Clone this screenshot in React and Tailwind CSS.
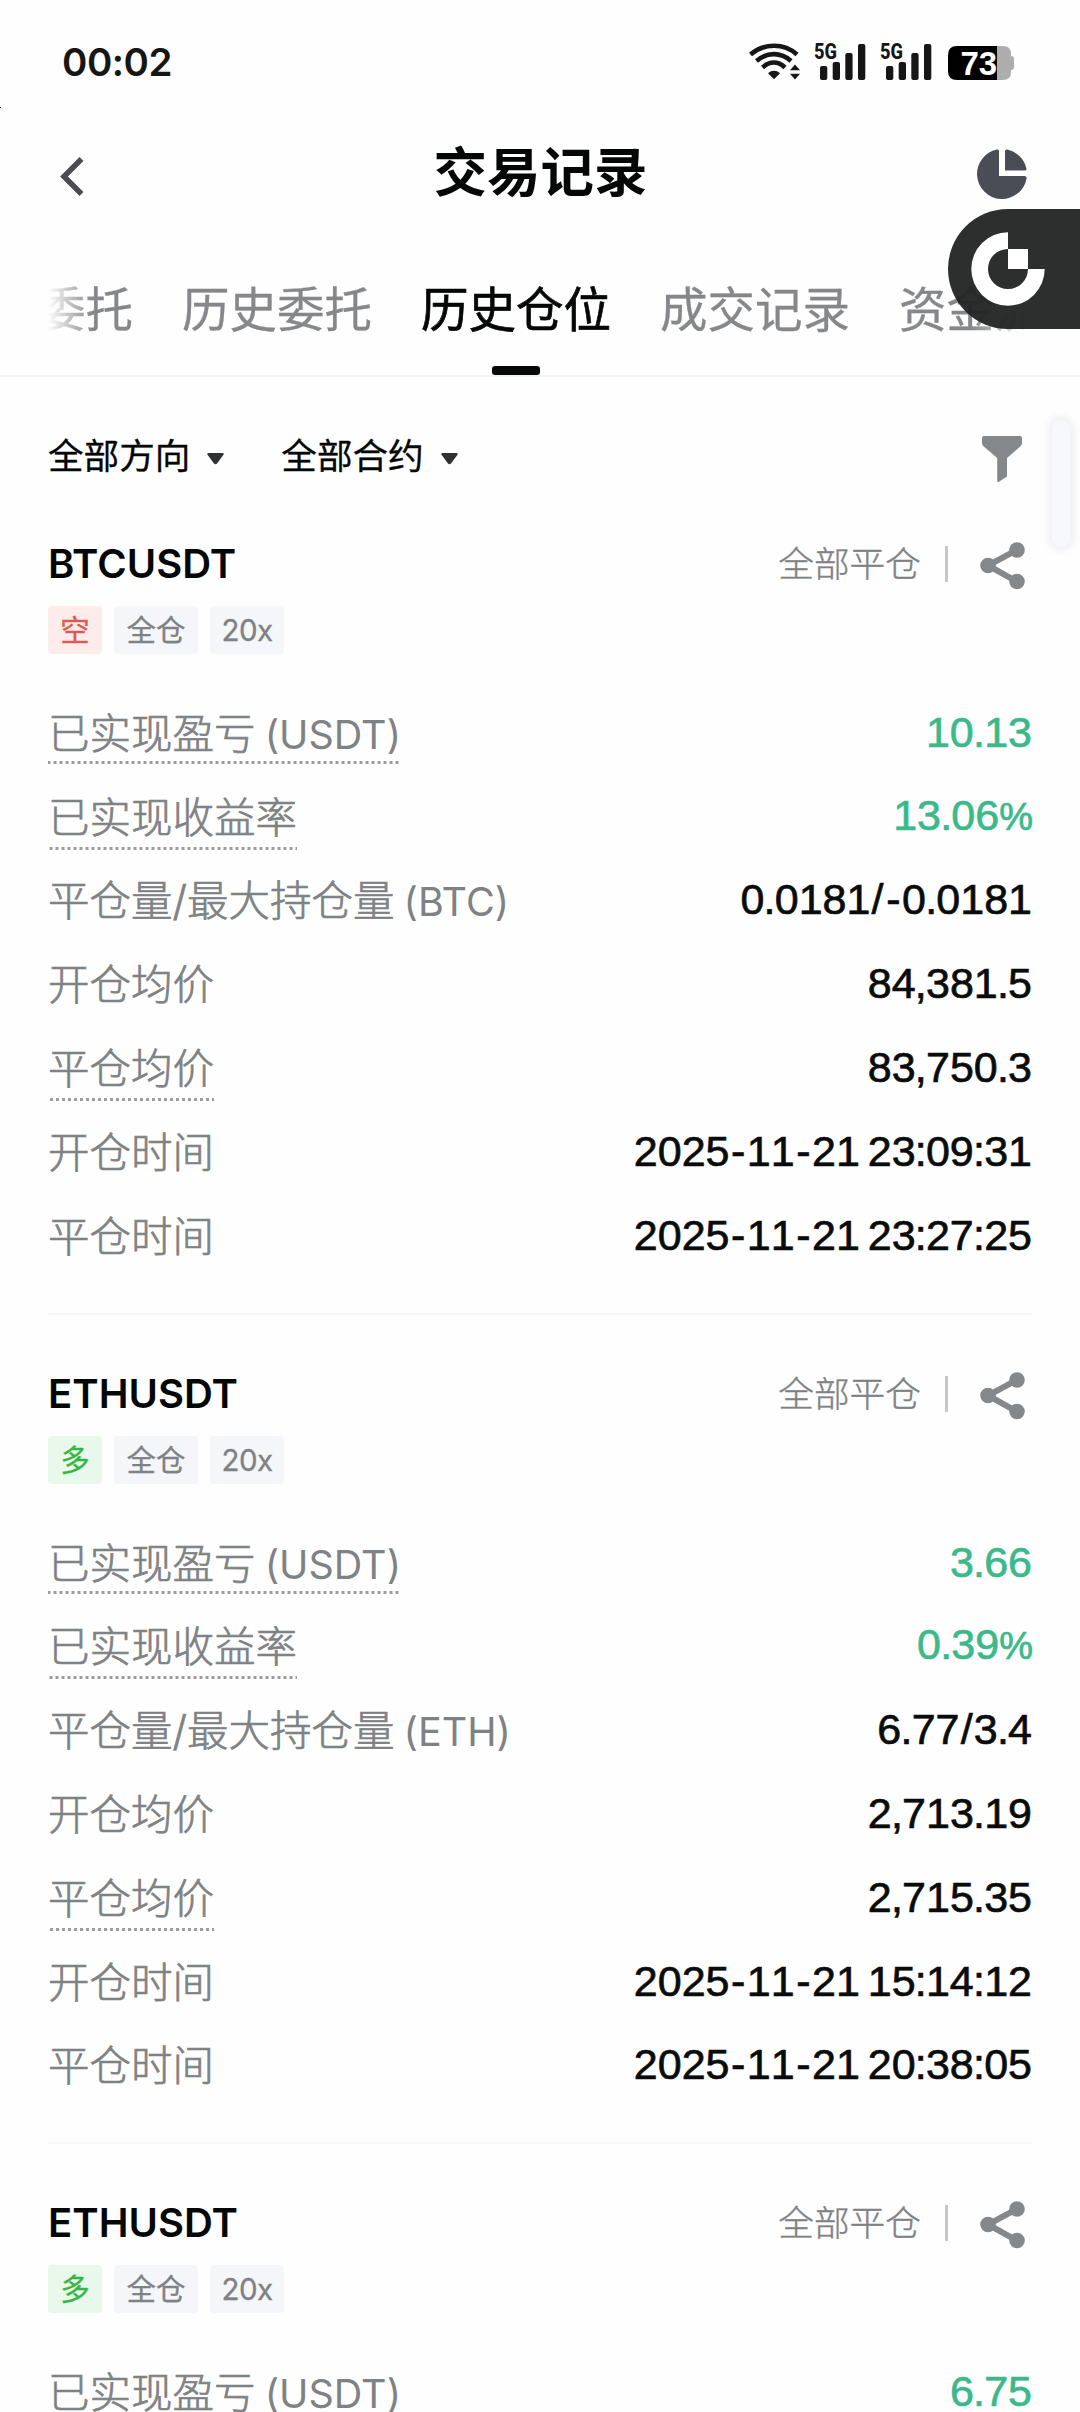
import React from 'react'
import { clsx } from 'clsx'

const tabs = ['当前委托', '历史委托', '历史仓位', '成交记录', '资金流水']

const positions = [
  {
    symbol: 'BTCUSDT',
    side: '空',
    pnl: '10.13',
    roi: '13.06%',
    coin: 'BTC',
    size: '0.0181/-0.0181',
    open: '84,381.5',
    close: '83,750.3',
    openTime: '2025-11-21 23:09:31',
    closeTime: '2025-11-21 23:27:25',
  },
  {
    symbol: 'ETHUSDT',
    side: '多',
    pnl: '3.66',
    roi: '0.39%',
    coin: 'ETH',
    size: '6.77/3.4',
    open: '2,713.19',
    close: '2,715.35',
    openTime: '2025-11-21 15:14:12',
    closeTime: '2025-11-21 20:38:05',
  },
  {
    symbol: 'ETHUSDT',
    side: '多',
    pnl: '6.75',
  },
]

const Signal = () => (
  <svg className="w-[52px] h-[38px] overflow-visible" viewBox="0 0 52 38" fill="#161616">
    <text x="0" y="17" fontFamily="Roboto" fontWeight="800" fontSize="22" textLength="23" lengthAdjust="spacingAndGlyphs">5G</text>
    <rect x="6" y="24" width="7.3" height="14" rx="2" />
    <rect x="18.7" y="20" width="7.3" height="18" rx="2" />
    <rect x="31.3" y="11" width="7.3" height="27" rx="2" />
    <rect x="44" y="2" width="7.3" height="36" rx="2" />
  </svg>
)

const Wifi = () => (
  <svg className="w-[51px] h-[38px]" viewBox="0 0 51 38" fill="none" stroke="#161616" strokeWidth="4.6">
    <path d="M1.5 12.5C15 .9 35 .9 48 12.5" />
    <path d="M7.5 19C18 9.8 32 9.8 42 19" />
    <path d="M13.5 25.5C20.5 19 29 19 36 25.5" />
    <path d="M19 31.3C22.5 28 27.5 28 31 31.3L25 37.2Z" fill="#161616" stroke="none" />
    <path d="M41 28.2L46 22.5L51 28.2ZM41 31.8L46 37.5L51 31.8Z" fill="#161616" stroke="none" />
  </svg>
)

const Battery = () => (
  <div className="relative w-[66px] h-[34px]">
    <svg className="w-full h-full" viewBox="0 0 66 34">
      <path d="M49 0h6q8 0 8 8v2q3 0 3 3v8q0 3-3 3v2q0 8-8 8h-6z" fill="#adadad" />
      <path d="M49 0H9Q0 0 0 9v16q0 9 9 9h40z" fill="#000" />
    </svg>
    <span className="absolute left-[12.5px] top-0 leading-[36px] text-[33px] font-bold text-white font-['Liberation_Sans',sans-serif]">73</span>
  </div>
)

const StatusBar = () => (
  <div className="shrink-0 flex justify-between h-[108px] pl-[62px] pr-[66px]">
    <span className="mt-[38px] h-[48px] leading-[48px] text-[38.5px] font-semibold text-[#161616] tracking-[-0.5px]">00:02</span>
    <div className="flex items-start pt-[42px]">
      <Wifi />
      <div className="ml-[14px] flex gap-[14px]">
        <Signal />
        <Signal />
      </div>
      <div className="ml-[16px] mt-[4px]">
        <Battery />
      </div>
    </div>
  </div>
)

const Header = () => (
  <div className="shrink-0 flex items-center justify-between h-[132px] pl-[56px] pr-[53px]">
    <svg className="w-[50px] h-[44px] mt-[4px]" viewBox="0 0 50 44" fill="none" stroke="#4a4c4f" strokeWidth="5.5">
      <path d="M25.5 5L8 22.5L25.5 40" />
    </svg>
    <h1 className="text-[53.5px] leading-[64px] font-bold text-[#050707] -mt-[3px] -ml-[2px]">交易记录</h1>
    <svg className="w-[50px] h-[50px]" viewBox="0 0 50 50" fill="#4a4d56">
      <path d="M20 .5Q22 0 22 2V27H47.5Q50 27 49.6 29.5A25 25 0 1 1 20 .5Z" />
      <path d="M28 2.2Q28 0 30.5 .6A25 25 0 0 1 49.4 19.5Q50 21.5 47.8 21.5H28Z" />
    </svg>
  </div>
)

const Tabs = () => (
  <div className="shrink-0 h-[137px] px-12 border-b-2 border-[#f3f4f5]">
    <div className="h-full flex gap-[47px] overflow-hidden [mask-image:linear-gradient(90deg,transparent,#000_45px,#000_calc(100%-60px),transparent)]">
      {tabs.map((tab, i) => (
        <div
          key={tab}
          className={clsx(
            'relative shrink-0 w-[192px] h-full text-[47.5px] leading-[139px] whitespace-nowrap',
            i === 0 && '-ml-[105px]',
            tab === '历史仓位' ? 'text-[#050707] [-webkit-text-stroke:0.7px_currentColor]' : 'text-[#85878a] [-webkit-text-stroke:0.3px_currentColor]'
          )}
        >
          {tab}
          {tab === '历史仓位' && <i className="absolute bottom-0 left-[71px] w-[48px] h-[9px] rounded-[3px] bg-[#050707]" />}
        </div>
      ))}
    </div>
  </div>
)

const Dropdown = ({ label }) => (
  <div className="flex items-center">
    <span className="mt-[2px] text-[35.6px] leading-[56px] text-[#050707] [-webkit-text-stroke:0.3px_currentColor]">{label}</span>
    <svg className="ml-[17px] mt-[6px] w-[17px] h-[12px]" viewBox="0 0 17 12" fill="#2f3133">
      <path d="M1.5 0h14q2 .3 .8 2l-6.3 8.5q-1.5 1.5-3 0L.7 2Q-.5 .3 1.5 0z" />
    </svg>
  </div>
)

const Filters = () => (
  <div className="shrink-0 flex justify-between h-[108px] pt-[51px] pl-12 pr-[58px]">
    <div className="flex items-center gap-[57px] h-[56px]">
      <Dropdown label="全部方向" />
      <Dropdown label="全部合约" />
    </div>
    <svg className="mt-[8px] w-[40px] h-[46px]" viewBox="0 0 40 46" fill="#85888b">
      <path d="M2 0h36q2 0 2 2v5q0 2-1.5 3.3L25 22v18.5L16.5 46q-1.3 .6-1.3-1V22L1.5 10.3Q0 9 0 7V2Q0 0 2 0z" />
    </svg>
  </div>
)

const Figures = ({ text }) =>
  text.split(/([.,:%/-])/).map((part, i) => {
    if (part === '-') return <span key={i} className="mx-[1.5px]">-</span>
    if (part === '/') return <span key={i} className="mx-[1.2px]">/</span>
    if (part === '%') return <span key={i} className="text-[38px] tracking-[-1px]">%</span>
    if (/^[.,:]$/.test(part)) return <span key={i} className="-mx-[0.8px]">{part}</span>
    return part
  })

const Row = ({ label, unit, value, hint, green }) => (
  <div className="flex items-center justify-between h-[83.8px]">
    <span
      className={clsx(
        'text-[41.5px] leading-[60px] font-light text-[#7f8284] [-webkit-text-stroke:0.7px_currentColor]',
        hint && 'bg-[linear-gradient(90deg,#9b9d9f_50%,transparent_50%)] bg-[length:6px_3px] bg-repeat-x bg-bottom',
        hint && !unit ? 'mt-[6px] h-[62px]' : 'mt-[4px] h-[60px]'
      )}
    >
      {label}
      {unit && <span className="text-[39.5px] font-normal [-webkit-text-stroke:0] [word-spacing:-2px]"> ({unit})</span>}
    </span>
    <span
      className={clsx(
        "text-[43px] leading-[60px] font-['Liberation_Sans',sans-serif] [font-kerning:none] [word-spacing:-4px] [-webkit-text-stroke:0.7px_currentColor]",
        green ? 'text-[#3cb98a]' : 'text-[#0a0c0c]'
      )}
    >
      <Figures text={value} />
    </span>
  </div>
)

const Position = ({ p }) => (
  <div className="mx-12 h-[829.7px] shrink-0 pt-[52px] border-b-2 border-[#f6f7f8]">
    <div className="flex items-center justify-between h-[54px]">
      <h2 className="text-[40px] leading-[54px] font-semibold text-[#050707]">{p.symbol}</h2>
      <div className="flex items-center pr-[7px]">
        <span className="text-[35.7px] leading-[54px] font-light text-[#7f8284] [-webkit-text-stroke:0.4px_currentColor]">全部平仓</span>
        <i className="ml-[24px] w-[3px] h-[36px] bg-[#c6c7c8]" />
        <svg className="ml-[32px] mt-[4px] w-[45px] h-[48px]" viewBox="0 0 45 48" fill="#85888b">
          <path d="M37 8L8 23.5L37 39.5" fill="none" stroke="#85888b" strokeWidth="6" />
          <circle cx="37" cy="8" r="7.8" />
          <circle cx="8" cy="23.5" r="7.8" />
          <circle cx="37" cy="39.5" r="7.8" />
        </svg>
      </div>
    </div>
    <div className="flex gap-[12px] mt-[15px] h-[48px] text-[29.5px] leading-[49px] [-webkit-text-stroke:0.3px_currentColor]">
      <span className={clsx('w-[54px] text-center rounded-[4px]', p.side === '空' ? 'bg-[#feeceb] text-[#dd5a50]' : 'bg-[#e8f8ea] text-[#36b543]')}>{p.side}</span>
      <span className="w-[84px] text-center rounded-[4px] bg-[#f4f6f9] text-[#7f8284]">全仓</span>
      <span className="w-[74px] text-center rounded-[4px] bg-[#f4f6f9] text-[#7f8284] tracking-[-0.5px]">20x</span>
    </div>
    <div className="mt-[36px]">
      <Row label="已实现盈亏" unit="USDT" value={p.pnl} hint green />
      {p.roi && (
        <>
          <Row label="已实现收益率" value={p.roi} hint green />
          <Row label="平仓量/最大持仓量" unit={p.coin} value={p.size} />
          <Row label="开仓均价" value={p.open} />
          <Row label="平仓均价" value={p.close} hint />
          <Row label="开仓时间" value={p.openTime} />
          <Row label="平仓时间" value={p.closeTime} />
        </>
      )}
    </div>
  </div>
)

export default function App() {
  return (
    <div className="relative flex flex-col w-[1080px] h-[2412px] overflow-hidden bg-[#fefefe] font-['Inter','Noto_Sans_CJK_SC',sans-serif]">
      <StatusBar />
      <Header />
      <Tabs />
      <Filters />
      {positions.map((p, i) => <Position key={i} p={p} />)}

      {/* floating shortcut */}
      <div className="absolute right-0 top-[209px] w-[132px] h-[120px] rounded-l-[60px] bg-[#222424]/95">
        <svg className="absolute left-[23px] top-[23px] w-[74px] h-[74px]" viewBox="-37 -37 74 74" fill="#fff">
          <path d="M0-36.7A36.7 36.7 0 1 0 36.7 0H20A20 20 0 1 1 0-20Z" />
          <rect x="0" y="-20" width="20" height="20" />
        </svg>
      </div>
      <i className="absolute right-[10px] top-[420px] w-[18px] h-[127px] rounded-[9px] bg-[#f7f8fe] shadow-[0_0_8px_3px_#ededf0]" />
      <i className="absolute left-0 top-[107px] w-px h-px bg-black" />
    </div>
  )
}
